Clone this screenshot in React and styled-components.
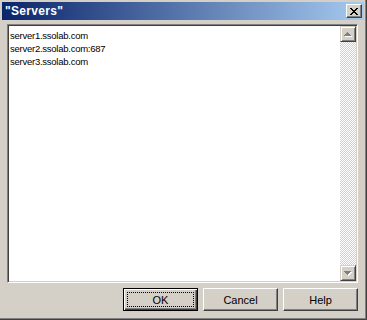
import React from 'react';
import styled, { createGlobalStyle } from 'styled-components';

const Global = createGlobalStyle`
  html, body {
    margin: 0;
    padding: 0;
    background: #d4d0c8;
  }
  body {
    font-family: "Liberation Sans", Arial, sans-serif;
    font-size: 11px;
  }
`;

const Window = styled.div`
  box-sizing: border-box;
  width: 367px;
  height: 320px;
  display: flex;
  flex-direction: column;
  padding: 2px;
  background: #d4d0c8;
  border-right: 1px solid #404040;
  border-bottom: 1px solid #404040;
  box-shadow: inset -1px -1px 0 #808080;
`;

const TitleBar = styled.div`
  height: 18px;
  flex: none;
  display: flex;
  align-items: center;
  justify-content: space-between;
  padding: 0 2px 0 3px;
  background: linear-gradient(to right, #0a246a, #a6caf0);
`;

const Title = styled.span`
  color: #fff;
  font-weight: bold;
  font-size: 12px;
  letter-spacing: 0.3px;
`;

const CloseButton = styled.button`
  box-sizing: border-box;
  width: 16px;
  height: 14px;
  padding: 0;
  margin: 0;
  display: flex;
  align-items: center;
  justify-content: center;
  background: #d4d0c8;
  border: 1px solid;
  border-color: #fff #404040 #404040 #fff;
  box-shadow: inset -1px -1px 0 #808080;
`;

const Client = styled.div`
  flex: 1;
  display: flex;
  flex-direction: column;
  gap: 5px;
  padding: 4px 6px 6px 5px;
  min-height: 0;
`;

const ListBox = styled.div`
  flex: 1;
  display: flex;
  background: #fff;
  border: 1px solid;
  border-color: #808080 #fff #fff #808080;
  box-shadow: inset 1px 1px 0 #404040, inset -1px -1px 0 #d4d0c8;
  padding: 1px;
  min-height: 0;
`;

const Lines = styled.div`
  flex: 1;
  padding: 3px 1px;
  color: #000;
  font-size: 9.5px;
  letter-spacing: -0.25px;
  line-height: 13px;
`;

const Line = styled.div`
  white-space: nowrap;
`;

const ScrollBar = styled.div`
  width: 16px;
  display: flex;
  flex-direction: column;
`;

const Track = styled.div`
  flex: 1;
  background: repeating-conic-gradient(#d4d0c8 0 25%, #fff 0 50%) 0 0 / 2px 2px;
`;

const ArrowButton = styled.div`
  box-sizing: border-box;
  width: 16px;
  height: 16px;
  display: flex;
  align-items: center;
  justify-content: center;
  background: #d4d0c8;
  border: 1px solid;
  border-color: #d4d0c8 #404040 #404040 #d4d0c8;
  box-shadow: inset 1px 1px 0 #fff, inset -1px -1px 0 #808080;
`;

const ButtonRow = styled.div`
  display: flex;
  justify-content: flex-end;
  gap: 5px;
`;

const Button = styled.button`
  box-sizing: border-box;
  width: 75px;
  height: 23px;
  padding: 0;
  margin: 0;
  position: relative;
  font-family: "Liberation Sans", Arial, sans-serif;
  font-size: 11px;
  color: #000;
  background: #d4d0c8;
  border: 1px solid;
  border-color: ${p => (p.$default ? '#000' : '#fff #404040 #404040 #fff')};
  box-shadow: ${p =>
    p.$default
      ? 'inset 1px 1px 0 #fff, inset -1px -1px 0 #404040, inset -2px -2px 0 #808080'
      : 'inset -1px -1px 0 #808080'};
`;

const Focus = styled.span`
  position: absolute;
  inset: 3px;
  border: 1px dotted #000;
  display: flex;
  align-items: center;
  justify-content: center;
`;

const CloseGlyph = () => (
  <svg width="8" height="7" viewBox="0 0 8 7" shapeRendering="crispEdges">
    <path
      d="M0 0h2v1h-2zM6 0h2v1h-2zM1 1h2v1h-2zM5 1h2v1h-2zM2 2h4v1h-4zM3 3h2v1h-2zM2 4h4v1h-4zM1 5h2v1h-2zM5 5h2v1h-2zM0 6h2v1h-2zM6 6h2v1h-2z"
      fill="#000"
    />
  </svg>
);

const Arrow = ({ down }) => {
  const d = down
    ? 'M0 0h7v1h-7zM1 1h5v1h-5zM2 2h3v1h-3zM3 3h1v1h-1z'
    : 'M3 0h1v1h-1zM2 1h3v1h-3zM1 2h5v1h-5zM0 3h7v1h-7z';
  return (
    <svg width="8" height="5" viewBox="0 0 8 5" shapeRendering="crispEdges">
      <path d={d} fill="#fff" transform="translate(1 1)" />
      <path d={d} fill="#808080" />
    </svg>
  );
};

const servers = ['server1.ssolab.com', 'server2.ssolab.com:687', 'server3.ssolab.com'];

export default function App() {
  return (
    <>
      <Global />
      <Window>
        <TitleBar>
          <Title>"Servers"</Title>
          <CloseButton type="button" aria-label="Close">
            <CloseGlyph />
          </CloseButton>
        </TitleBar>
        <Client>
          <ListBox>
            <Lines>
              {servers.map(s => (
                <Line key={s}>{s}</Line>
              ))}
            </Lines>
            <ScrollBar>
              <ArrowButton>
                <Arrow />
              </ArrowButton>
              <Track />
              <ArrowButton>
                <Arrow down />
              </ArrowButton>
            </ScrollBar>
          </ListBox>
          <ButtonRow>
            <Button type="button" $default>
              <Focus>OK</Focus>
            </Button>
            <Button type="button">Cancel</Button>
            <Button type="button">Help</Button>
          </ButtonRow>
        </Client>
      </Window>
    </>
  );
}
